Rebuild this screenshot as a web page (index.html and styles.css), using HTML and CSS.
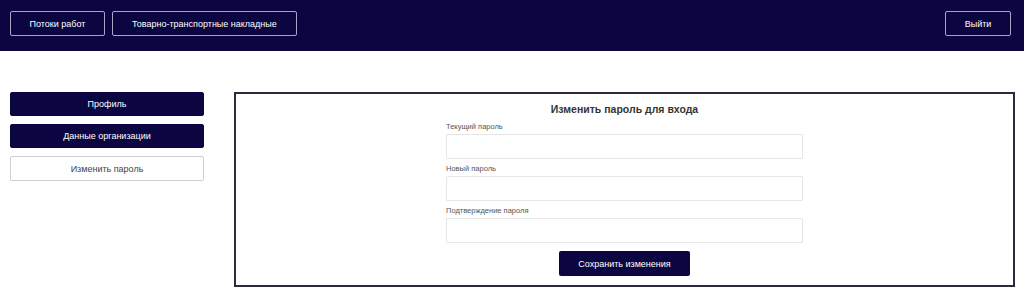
FILE: index.html
```html
<!DOCTYPE html>
<html lang="ru">
<head>
  <meta charset="UTF-8" />
  <title>Изменить пароль</title>
  <link rel="stylesheet" href="styles.css">
</head>
<body>
  <!-- Top bar -->
  <header class="topbar">
    <nav class="topbar-nav">
      <button class="nav-btn">Потоки работ</button>
      <button class="nav-btn">Товарно-транспортные накладные</button>
    </nav>
    <button class="nav-btn logout">Выйти</button>
  </header>

  <main class="page">
    <!-- Side menu -->
    <aside class="side-menu">
      <button class="side-btn">Профиль</button>
      <button class="side-btn">Данные организации</button>
      <button class="side-btn active">Изменить пароль</button>
    </aside>

    <!-- Password form -->
    <section class="panel">
      <form class="pass-form">
        <h2 class="form-title">Изменить пароль для входа</h2>
        <label class="field-label">Текущий пароль</label>
        <input class="field" type="password">
        <label class="field-label">Новый пароль</label>
        <input class="field" type="password">
        <label class="field-label">Подтверждение пароля</label>
        <input class="field" type="password">
        <button class="save-btn" type="button">Сохранить изменения</button>
      </form>
    </section>
  </main>
</body>
</html>
```

FILE: styles.css
```css
body {
  margin: 0;
  background: white;
  font-family: 'Liberation Sans', Arial, sans-serif;
  color: #333;
}

button {
  font-family: inherit;
  cursor: pointer;
}

.topbar {
  background: #0b0642;
  height: 51px;
  padding: 11px 13px 0 10px;
  box-sizing: border-box;
  display: flex;
  justify-content: space-between;
  align-items: flex-start;
}

.topbar-nav {
  display: flex;
  gap: 7px;
}

.nav-btn {
  height: 25px;
  background: transparent;
  color: white;
  border: 1px solid #a7a6c0;
  border-radius: 2px;
  font-size: 9px;
  padding: 0 19px;
}

.topbar-nav .nav-btn:first-child {
  width: 95px;
  padding: 0;
}

.nav-btn.logout {
  width: 66px;
  padding: 0;
}

.page {
  display: flex;
  padding: 41px 9px 0 10px;
  gap: 30px;
}

.side-menu {
  width: 194px;
  flex-shrink: 0;
  display: flex;
  flex-direction: column;
  gap: 8px;
}

.side-btn {
  height: 24px;
  background: #0b0642;
  color: white;
  border: 1px solid #0b0642;
  border-radius: 2px;
  font-size: 9px;
}

.side-btn.active {
  height: 25px;
  background: white;
  color: #444;
  border-color: #cfcfcf;
}

.panel {
  flex: 1;
  height: 195px;
  box-sizing: border-box;
  border: 2px solid #2c2a40;
  display: flex;
  justify-content: center;
}

.pass-form {
  width: 357px;
  display: flex;
  flex-direction: column;
  padding-top: 9px;
}

.form-title {
  margin: 0 0 6px;
  font-size: 10.5px;
  line-height: 13px;
  font-weight: bold;
  text-align: center;
  color: #333;
}

.field-label {
  font-size: 7.5px;
  line-height: 10px;
  color: #555;
  margin-bottom: 2px;
}

.field {
  height: 25px;
  box-sizing: border-box;
  border: 1px solid #e6e6e6;
  border-radius: 1px;
  margin: 0 0 5px;
  padding: 0;
}

.save-btn {
  align-self: center;
  width: 131px;
  height: 25px;
  margin-top: 3px;
  background: #0b0642;
  color: white;
  border: none;
  border-radius: 2px;
  font-size: 9px;
}
```
